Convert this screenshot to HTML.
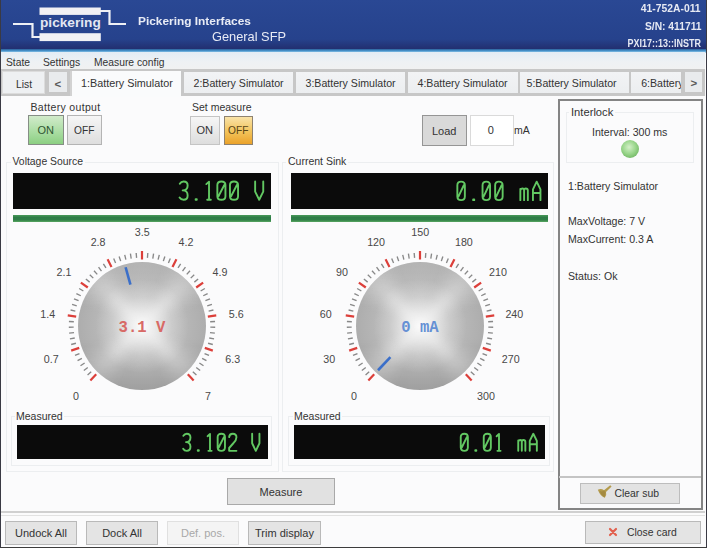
<!DOCTYPE html>
<html><head><meta charset="utf-8">
<style>
*{box-sizing:border-box;margin:0;padding:0}
html,body{width:708px;height:552px;overflow:hidden;background:#fff;font-family:"Liberation Sans",sans-serif;color:#333}
.a{position:absolute}
#root{position:absolute;left:0;top:0;width:708px;height:552px;overflow:hidden}
#win{left:0;top:0;width:707px;height:548px;background:#fbfbfc;border-left:1px solid #3c3c3c;border-right:1px solid #3c3c3c;border-bottom:1px solid #3c3c3c}
#hdr{left:0;top:0;width:706px;height:49px;background:linear-gradient(#2a4894,#26428c 80%,#222f70)}
#hline{left:0;top:48.5px;width:706px;height:4px;background:linear-gradient(#2b5f9a,#4a9ad2 50%,#a8cfea 85%,#d8e6f2)}
.t{position:absolute;white-space:nowrap;font-size:11px;line-height:13px}
#menu{left:1px;top:52px;width:704px;height:18px;background:linear-gradient(#e3ecf5,#eef1f4 55%,#f1f1f1)}
.btn{position:absolute;border:1px solid #a9a9a9;background:linear-gradient(#ededed,#dcdcdc);text-align:center;font-size:11px;white-space:nowrap;color:#333}
.lcd{position:absolute;background:#0b0b0b;overflow:hidden}
.gbar{position:absolute;height:6.5px;background:linear-gradient(#4a9a5a,#2e7c47 35%,#2f7f47 70%,#5aa862)}
.tabi{position:absolute;top:71.5px;height:21.7px;background:linear-gradient(#f2f3f5,#eceef0);overflow:hidden}
.tt{position:absolute;top:5.5px;white-space:nowrap;font-size:10.6px;line-height:13px;color:#333}
.grp{position:absolute;border:1px solid #eceef0}
</style></head><body><div id="root">
<div id="win" class="a"></div>
<div id="hdr" class="a"></div>
<div id="hline" class="a"></div>

<!-- logo -->
<svg class="a" style="left:0;top:0" width="140" height="49">
  <rect x="39.5" y="7.5" width="61.3" height="7.4" fill="#f1f1f4"/>
  <rect x="39.5" y="33.2" width="61.3" height="7.9" fill="#f1f1f4"/>
  <polyline points="13,24 32.5,24 32.5,37 40,37" fill="none" stroke="#eef0f5" stroke-width="2.2"/>
  <polyline points="100,11 109.5,11 109.5,24 126,24" fill="none" stroke="#eef0f5" stroke-width="2.2"/>
  <text x="0" y="0" transform="translate(40,27.2) scale(1.094,1)" font-family="Liberation Sans" font-weight="bold" font-size="12.5" fill="#e4e7f2">pickering</text>
</svg>
<div class="t" style="left:138px;top:15px;font-size:11px;font-weight:bold;color:#e8ebf5;transform:scaleX(1.08);transform-origin:left center">Pickering Interfaces</div>
<div class="t" style="left:211.5px;top:30px;font-size:13px;color:#e8ebf5;transform:scaleX(0.985);transform-origin:left center">General SFP</div>
<div class="t" style="right:7px;top:2px;font-size:11px;font-weight:bold;color:#e6e9f3;transform:scaleX(0.94);transform-origin:right center">41-752A-011</div>
<div class="t" style="right:6.5px;top:19.5px;font-size:11px;font-weight:bold;color:#e6e9f3;transform:scaleX(0.935);transform-origin:right center">S/N: 411711</div>
<div class="t" style="right:7px;top:37px;font-size:11px;font-weight:bold;color:#e6e9f3;transform:scaleX(0.815);transform-origin:right center">PXI17::13::INSTR</div>

<!-- menu -->
<div id="menu" class="a"></div>
<div class="t" style="left:6px;top:56px;font-size:10.3px">State</div>
<div class="t" style="left:43px;top:56px;font-size:10.3px">Settings</div>
<div class="t" style="left:94px;top:56px;font-size:10.3px">Measure config</div>


<!-- tabs -->
<div class="a" style="left:1px;top:68.5px;width:704px;height:27.5px;background:#c7c7c7"></div>
<div class="a" style="left:2px;top:71px;width:43px;height:22.5px;background:#eef0f2;border:1px solid #dcdcdc"></div>
<div class="t" style="left:16px;top:78px;font-size:10.3px">List</div>
<div class="a" style="left:49px;top:71.5px;width:18px;height:20.5px;background:#e9ebed"></div>
<div class="t" style="left:54.5px;top:77.5px;font-size:11.5px;font-weight:bold;color:#5a5a5a">&lt;</div>
<div class="a" style="left:70px;top:71px;width:112px;height:26px;background:#fafbfc"></div>
<div class="a" style="left:69.5px;top:71px;width:2.5px;height:25px;background:#d2d2d2"></div>
<div class="a" style="left:181px;top:71px;width:2.5px;height:25px;background:#c7c7c7"></div>
<div class="t" style="left:81px;top:77px;font-size:10.8px">1:Battery Simulator</div>
<div class="tabi" style="left:184px;width:109px"><span class="tt" style="left:9.5px">2:Battery Simulator</span></div>
<div class="tabi" style="left:296px;width:109px"><span class="tt" style="left:9.5px">3:Battery Simulator</span></div>
<div class="tabi" style="left:407.5px;width:110px"><span class="tt" style="left:10px">4:Battery Simulator</span></div>
<div class="tabi" style="left:520px;width:108.5px"><span class="tt" style="left:6.5px">5:Battery Simulator</span></div>
<div class="tabi" style="left:631.2px;width:49.7px"><span class="tt" style="left:10px">6:Battery Simulator</span></div>
<div class="a" style="left:685.3px;top:71.5px;width:17px;height:20.5px;background:#e9ebed"></div>
<div class="t" style="left:690.5px;top:77px;font-size:11.5px;font-weight:bold;color:#5a5a5a">&gt;</div>

<!-- battery output -->
<div class="t" style="left:30.5px;top:101px;font-size:10.5px;letter-spacing:0.33px">Battery output</div>
<div class="btn" style="left:28px;top:115px;width:35.5px;height:30px;line-height:29px;border:1.5px solid #868e86;background:linear-gradient(#d2ebcb,#a8dca0 60%,#8ccf82);color:#2f5530">ON</div>
<div class="btn" style="left:67px;top:115px;width:34.5px;height:30px;line-height:29px;border:1.5px solid #b4b4b4;background:linear-gradient(#f6f6f6,#dedede);font-size:10.2px">OFF</div>

<div class="t" style="left:192px;top:101px;font-size:10.5px">Set measure</div>
<div class="btn" style="left:189.5px;top:115.5px;width:30.5px;height:29.5px;line-height:26.5px;border:1.5px solid #c4c4c4;background:linear-gradient(#f6f6f6,#dddddd)">ON</div>
<div class="btn" style="left:223.5px;top:115.5px;width:29.5px;height:29.5px;line-height:28px;border:1.5px solid #8e8270;background:linear-gradient(#f9e3a8,#f2c35a 55%,#eba22a);color:#5a4515;font-size:10.2px">OFF</div>

<div class="btn" style="left:421.7px;top:114.7px;width:45px;height:31.8px;line-height:30px;border:1.5px solid #959595;background:#d9d9d9">Load</div>
<div class="btn" style="left:470px;top:115px;width:44px;height:31px;line-height:29px;border:1.5px solid #dadada;background:#fff;padding-right:2.6px">0</div>
<div class="t" style="left:514px;top:124px;font-size:10.5px">mA</div>

<!-- voltage source -->
<div class="grp" style="left:5.5px;top:162px;width:273px;height:310px"></div>
<div class="t" style="left:10.5px;top:155px;font-size:10.4px;background:#fbfbfc;padding:0 2px">Voltage Source</div>
<div class="lcd" style="left:13px;top:173px;width:258px;height:36px"></div>
<div class="gbar" style="left:13px;top:215px;width:258px"></div>
<svg class="a" style="left:32px;top:216px" width="220" height="220">
<line x1="64.22" y1="158.24" x2="58.37" y2="164.40" stroke="#dc3f3a" stroke-width="2.2"/>
<line x1="59.20" y1="155.66" x2="55.56" y2="158.93" stroke="#888888" stroke-width="1.35"/>
<line x1="55.74" y1="151.48" x2="51.85" y2="154.46" stroke="#888888" stroke-width="1.35"/>
<line x1="52.62" y1="147.05" x2="48.51" y2="149.71" stroke="#888888" stroke-width="1.35"/>
<line x1="49.86" y1="142.38" x2="45.55" y2="144.70" stroke="#888888" stroke-width="1.35"/>
<line x1="47.48" y1="137.51" x2="43.00" y2="139.48" stroke="#888888" stroke-width="1.35"/>
<line x1="47.20" y1="131.87" x2="39.17" y2="134.66" stroke="#dc3f3a" stroke-width="2.2"/>
<line x1="43.92" y1="127.27" x2="39.18" y2="128.51" stroke="#888888" stroke-width="1.35"/>
<line x1="42.76" y1="121.98" x2="37.93" y2="122.84" stroke="#888888" stroke-width="1.35"/>
<line x1="42.02" y1="116.61" x2="37.14" y2="117.08" stroke="#888888" stroke-width="1.35"/>
<line x1="41.71" y1="111.19" x2="36.81" y2="111.28" stroke="#888888" stroke-width="1.35"/>
<line x1="41.83" y1="105.77" x2="36.94" y2="105.47" stroke="#888888" stroke-width="1.35"/>
<line x1="44.16" y1="100.63" x2="35.75" y2="99.43" stroke="#dc3f3a" stroke-width="2.2"/>
<line x1="43.36" y1="95.04" x2="38.58" y2="93.97" stroke="#888888" stroke-width="1.35"/>
<line x1="44.75" y1="89.80" x2="40.07" y2="88.35" stroke="#888888" stroke-width="1.35"/>
<line x1="46.56" y1="84.69" x2="42.01" y2="82.88" stroke="#888888" stroke-width="1.35"/>
<line x1="48.77" y1="79.74" x2="44.38" y2="77.57" stroke="#888888" stroke-width="1.35"/>
<line x1="51.36" y1="74.98" x2="47.16" y2="72.46" stroke="#888888" stroke-width="1.35"/>
<line x1="55.79" y1="71.48" x2="48.87" y2="66.55" stroke="#dc3f3a" stroke-width="2.2"/>
<line x1="57.64" y1="66.14" x2="53.88" y2="63.00" stroke="#888888" stroke-width="1.35"/>
<line x1="61.28" y1="62.13" x2="57.79" y2="58.69" stroke="#888888" stroke-width="1.35"/>
<line x1="65.24" y1="58.41" x2="62.02" y2="54.71" stroke="#888888" stroke-width="1.35"/>
<line x1="69.47" y1="55.03" x2="66.56" y2="51.08" stroke="#888888" stroke-width="1.35"/>
<line x1="73.96" y1="51.98" x2="71.37" y2="47.82" stroke="#888888" stroke-width="1.35"/>
<line x1="79.50" y1="50.91" x2="75.60" y2="43.35" stroke="#dc3f3a" stroke-width="2.2"/>
<line x1="83.59" y1="47.01" x2="81.69" y2="42.49" stroke="#888888" stroke-width="1.35"/>
<line x1="88.67" y1="45.12" x2="87.14" y2="40.46" stroke="#888888" stroke-width="1.35"/>
<line x1="93.88" y1="43.63" x2="92.73" y2="38.87" stroke="#888888" stroke-width="1.35"/>
<line x1="99.20" y1="42.56" x2="98.42" y2="37.72" stroke="#888888" stroke-width="1.35"/>
<line x1="104.58" y1="41.92" x2="104.19" y2="37.03" stroke="#888888" stroke-width="1.35"/>
<line x1="110.00" y1="43.50" x2="110.00" y2="35.00" stroke="#dc3f3a" stroke-width="2.2"/>
<line x1="115.42" y1="41.92" x2="115.81" y2="37.03" stroke="#888888" stroke-width="1.35"/>
<line x1="120.80" y1="42.56" x2="121.58" y2="37.72" stroke="#888888" stroke-width="1.35"/>
<line x1="126.12" y1="43.63" x2="127.27" y2="38.87" stroke="#888888" stroke-width="1.35"/>
<line x1="131.33" y1="45.12" x2="132.86" y2="40.46" stroke="#888888" stroke-width="1.35"/>
<line x1="136.41" y1="47.01" x2="138.31" y2="42.49" stroke="#888888" stroke-width="1.35"/>
<line x1="140.50" y1="50.91" x2="144.40" y2="43.35" stroke="#dc3f3a" stroke-width="2.2"/>
<line x1="146.04" y1="51.98" x2="148.63" y2="47.82" stroke="#888888" stroke-width="1.35"/>
<line x1="150.53" y1="55.03" x2="153.44" y2="51.08" stroke="#888888" stroke-width="1.35"/>
<line x1="154.76" y1="58.41" x2="157.98" y2="54.71" stroke="#888888" stroke-width="1.35"/>
<line x1="158.72" y1="62.13" x2="162.21" y2="58.69" stroke="#888888" stroke-width="1.35"/>
<line x1="162.36" y1="66.14" x2="166.12" y2="63.00" stroke="#888888" stroke-width="1.35"/>
<line x1="164.21" y1="71.48" x2="171.13" y2="66.55" stroke="#dc3f3a" stroke-width="2.2"/>
<line x1="168.64" y1="74.98" x2="172.84" y2="72.46" stroke="#888888" stroke-width="1.35"/>
<line x1="171.23" y1="79.74" x2="175.62" y2="77.57" stroke="#888888" stroke-width="1.35"/>
<line x1="173.44" y1="84.69" x2="177.99" y2="82.88" stroke="#888888" stroke-width="1.35"/>
<line x1="175.25" y1="89.80" x2="179.93" y2="88.35" stroke="#888888" stroke-width="1.35"/>
<line x1="176.64" y1="95.04" x2="181.42" y2="93.97" stroke="#888888" stroke-width="1.35"/>
<line x1="175.84" y1="100.63" x2="184.25" y2="99.43" stroke="#dc3f3a" stroke-width="2.2"/>
<line x1="178.17" y1="105.77" x2="183.06" y2="105.47" stroke="#888888" stroke-width="1.35"/>
<line x1="178.29" y1="111.19" x2="183.19" y2="111.28" stroke="#888888" stroke-width="1.35"/>
<line x1="177.98" y1="116.61" x2="182.86" y2="117.08" stroke="#888888" stroke-width="1.35"/>
<line x1="177.24" y1="121.98" x2="182.07" y2="122.84" stroke="#888888" stroke-width="1.35"/>
<line x1="176.08" y1="127.27" x2="180.82" y2="128.51" stroke="#888888" stroke-width="1.35"/>
<line x1="172.80" y1="131.87" x2="180.83" y2="134.66" stroke="#dc3f3a" stroke-width="2.2"/>
<line x1="172.52" y1="137.51" x2="177.00" y2="139.48" stroke="#888888" stroke-width="1.35"/>
<line x1="170.14" y1="142.38" x2="174.45" y2="144.70" stroke="#888888" stroke-width="1.35"/>
<line x1="167.38" y1="147.05" x2="171.49" y2="149.71" stroke="#888888" stroke-width="1.35"/>
<line x1="164.26" y1="151.48" x2="168.15" y2="154.46" stroke="#888888" stroke-width="1.35"/>
<line x1="160.80" y1="155.66" x2="164.44" y2="158.93" stroke="#888888" stroke-width="1.35"/>
<line x1="155.78" y1="158.24" x2="161.63" y2="164.40" stroke="#dc3f3a" stroke-width="2.2"/>
<text x="44.0" y="183.8" text-anchor="middle" font-family="Liberation Sans" font-size="10.7" fill="#484848">0</text>
<text x="19.3" y="147.3" text-anchor="middle" font-family="Liberation Sans" font-size="10.7" fill="#484848">0.7</text>
<text x="15.7" y="101.5" text-anchor="middle" font-family="Liberation Sans" font-size="10.7" fill="#484848">1.4</text>
<text x="32.0" y="59.9" text-anchor="middle" font-family="Liberation Sans" font-size="10.7" fill="#484848">2.1</text>
<text x="66.1" y="29.6" text-anchor="middle" font-family="Liberation Sans" font-size="10.7" fill="#484848">2.8</text>
<text x="110.2" y="19.6" text-anchor="middle" font-family="Liberation Sans" font-size="10.7" fill="#484848">3.5</text>
<text x="153.9" y="29.6" text-anchor="middle" font-family="Liberation Sans" font-size="10.7" fill="#484848">4.2</text>
<text x="188.0" y="59.9" text-anchor="middle" font-family="Liberation Sans" font-size="10.7" fill="#484848">4.9</text>
<text x="204.3" y="101.5" text-anchor="middle" font-family="Liberation Sans" font-size="10.7" fill="#484848">5.6</text>
<text x="200.7" y="147.3" text-anchor="middle" font-family="Liberation Sans" font-size="10.7" fill="#484848">6.3</text>
<text x="176.0" y="183.8" text-anchor="middle" font-family="Liberation Sans" font-size="10.7" fill="#484848">7</text>
</svg><div class="a" style="left:78px;top:262px;width:128px;height:128px;border-radius:50%;overflow:hidden;background:radial-gradient(circle at 50% 50%,#c4c4c4 0%,#b6b6b6 50%,#aaaaaa 78%,#989898 94%,#909090 100%)"><div class="a" style="left:-20px;top:-20px;width:168px;height:168px;filter:blur(5px);-webkit-mask-image:radial-gradient(circle,#000 0%,#000 30%,rgba(0,0,0,.5) 60%,rgba(0,0,0,.2) 80%);background:conic-gradient(rgba(255,255,255,0) 0deg,rgba(255,255,255,0) 22deg,rgba(255,255,255,.45) 45deg,rgba(255,255,255,0) 68deg,rgba(255,255,255,0) 112deg,rgba(255,255,255,.45) 135deg,rgba(255,255,255,0) 158deg,rgba(255,255,255,0) 202deg,rgba(255,255,255,.45) 225deg,rgba(255,255,255,0) 248deg,rgba(255,255,255,0) 292deg,rgba(255,255,255,.45) 315deg,rgba(255,255,255,0) 338deg,rgba(255,255,255,0) 360deg)"></div><div class="a" style="left:0;top:0;width:100%;height:100%;border-radius:50%;background:radial-gradient(circle at 50% 50%, rgba(255,255,255,.92) 0%, rgba(255,255,255,.62) 16%, rgba(255,255,255,.25) 33%, rgba(255,255,255,0) 52%),linear-gradient(rgba(255,255,255,.08),rgba(255,255,255,0) 40%,rgba(0,0,0,0) 60%,rgba(0,0,0,.08))"></div></div><svg class="a" style="left:72px;top:256px" width="140" height="140"><line x1="58.44" y1="28.58" x2="53.60" y2="11.25" stroke="#3b6fc9" stroke-width="2.6"/></svg>
<div class="t" style="left:100px;top:320px;width:84px;text-align:center;font-family:'Liberation Mono';font-weight:bold;font-size:15.6px;line-height:16px;color:#d86a66">3.1 V</div>
<div class="grp" style="left:11px;top:416px;width:261px;height:50px"></div>
<div class="t" style="left:15px;top:410px;font-size:10.5px;background:#fbfbfc;padding:0 1px">Measured</div>
<div class="lcd" style="left:17px;top:425px;width:251px;height:34px"></div>

<!-- current sink -->
<div class="grp" style="left:282px;top:162px;width:271.5px;height:310px"></div>
<div class="t" style="left:286px;top:155px;font-size:10.5px;background:#fbfbfc;padding:0 2px">Current Sink</div>
<div class="lcd" style="left:291px;top:173px;width:257px;height:36px"></div>
<div class="gbar" style="left:291px;top:215px;width:257px"></div>
<svg class="a" style="left:310px;top:216px" width="220" height="220">
<line x1="64.22" y1="158.24" x2="58.37" y2="164.40" stroke="#dc3f3a" stroke-width="2.2"/>
<line x1="59.20" y1="155.66" x2="55.56" y2="158.93" stroke="#888888" stroke-width="1.35"/>
<line x1="55.74" y1="151.48" x2="51.85" y2="154.46" stroke="#888888" stroke-width="1.35"/>
<line x1="52.62" y1="147.05" x2="48.51" y2="149.71" stroke="#888888" stroke-width="1.35"/>
<line x1="49.86" y1="142.38" x2="45.55" y2="144.70" stroke="#888888" stroke-width="1.35"/>
<line x1="47.48" y1="137.51" x2="43.00" y2="139.48" stroke="#888888" stroke-width="1.35"/>
<line x1="47.20" y1="131.87" x2="39.17" y2="134.66" stroke="#dc3f3a" stroke-width="2.2"/>
<line x1="43.92" y1="127.27" x2="39.18" y2="128.51" stroke="#888888" stroke-width="1.35"/>
<line x1="42.76" y1="121.98" x2="37.93" y2="122.84" stroke="#888888" stroke-width="1.35"/>
<line x1="42.02" y1="116.61" x2="37.14" y2="117.08" stroke="#888888" stroke-width="1.35"/>
<line x1="41.71" y1="111.19" x2="36.81" y2="111.28" stroke="#888888" stroke-width="1.35"/>
<line x1="41.83" y1="105.77" x2="36.94" y2="105.47" stroke="#888888" stroke-width="1.35"/>
<line x1="44.16" y1="100.63" x2="35.75" y2="99.43" stroke="#dc3f3a" stroke-width="2.2"/>
<line x1="43.36" y1="95.04" x2="38.58" y2="93.97" stroke="#888888" stroke-width="1.35"/>
<line x1="44.75" y1="89.80" x2="40.07" y2="88.35" stroke="#888888" stroke-width="1.35"/>
<line x1="46.56" y1="84.69" x2="42.01" y2="82.88" stroke="#888888" stroke-width="1.35"/>
<line x1="48.77" y1="79.74" x2="44.38" y2="77.57" stroke="#888888" stroke-width="1.35"/>
<line x1="51.36" y1="74.98" x2="47.16" y2="72.46" stroke="#888888" stroke-width="1.35"/>
<line x1="55.79" y1="71.48" x2="48.87" y2="66.55" stroke="#dc3f3a" stroke-width="2.2"/>
<line x1="57.64" y1="66.14" x2="53.88" y2="63.00" stroke="#888888" stroke-width="1.35"/>
<line x1="61.28" y1="62.13" x2="57.79" y2="58.69" stroke="#888888" stroke-width="1.35"/>
<line x1="65.24" y1="58.41" x2="62.02" y2="54.71" stroke="#888888" stroke-width="1.35"/>
<line x1="69.47" y1="55.03" x2="66.56" y2="51.08" stroke="#888888" stroke-width="1.35"/>
<line x1="73.96" y1="51.98" x2="71.37" y2="47.82" stroke="#888888" stroke-width="1.35"/>
<line x1="79.50" y1="50.91" x2="75.60" y2="43.35" stroke="#dc3f3a" stroke-width="2.2"/>
<line x1="83.59" y1="47.01" x2="81.69" y2="42.49" stroke="#888888" stroke-width="1.35"/>
<line x1="88.67" y1="45.12" x2="87.14" y2="40.46" stroke="#888888" stroke-width="1.35"/>
<line x1="93.88" y1="43.63" x2="92.73" y2="38.87" stroke="#888888" stroke-width="1.35"/>
<line x1="99.20" y1="42.56" x2="98.42" y2="37.72" stroke="#888888" stroke-width="1.35"/>
<line x1="104.58" y1="41.92" x2="104.19" y2="37.03" stroke="#888888" stroke-width="1.35"/>
<line x1="110.00" y1="43.50" x2="110.00" y2="35.00" stroke="#dc3f3a" stroke-width="2.2"/>
<line x1="115.42" y1="41.92" x2="115.81" y2="37.03" stroke="#888888" stroke-width="1.35"/>
<line x1="120.80" y1="42.56" x2="121.58" y2="37.72" stroke="#888888" stroke-width="1.35"/>
<line x1="126.12" y1="43.63" x2="127.27" y2="38.87" stroke="#888888" stroke-width="1.35"/>
<line x1="131.33" y1="45.12" x2="132.86" y2="40.46" stroke="#888888" stroke-width="1.35"/>
<line x1="136.41" y1="47.01" x2="138.31" y2="42.49" stroke="#888888" stroke-width="1.35"/>
<line x1="140.50" y1="50.91" x2="144.40" y2="43.35" stroke="#dc3f3a" stroke-width="2.2"/>
<line x1="146.04" y1="51.98" x2="148.63" y2="47.82" stroke="#888888" stroke-width="1.35"/>
<line x1="150.53" y1="55.03" x2="153.44" y2="51.08" stroke="#888888" stroke-width="1.35"/>
<line x1="154.76" y1="58.41" x2="157.98" y2="54.71" stroke="#888888" stroke-width="1.35"/>
<line x1="158.72" y1="62.13" x2="162.21" y2="58.69" stroke="#888888" stroke-width="1.35"/>
<line x1="162.36" y1="66.14" x2="166.12" y2="63.00" stroke="#888888" stroke-width="1.35"/>
<line x1="164.21" y1="71.48" x2="171.13" y2="66.55" stroke="#dc3f3a" stroke-width="2.2"/>
<line x1="168.64" y1="74.98" x2="172.84" y2="72.46" stroke="#888888" stroke-width="1.35"/>
<line x1="171.23" y1="79.74" x2="175.62" y2="77.57" stroke="#888888" stroke-width="1.35"/>
<line x1="173.44" y1="84.69" x2="177.99" y2="82.88" stroke="#888888" stroke-width="1.35"/>
<line x1="175.25" y1="89.80" x2="179.93" y2="88.35" stroke="#888888" stroke-width="1.35"/>
<line x1="176.64" y1="95.04" x2="181.42" y2="93.97" stroke="#888888" stroke-width="1.35"/>
<line x1="175.84" y1="100.63" x2="184.25" y2="99.43" stroke="#dc3f3a" stroke-width="2.2"/>
<line x1="178.17" y1="105.77" x2="183.06" y2="105.47" stroke="#888888" stroke-width="1.35"/>
<line x1="178.29" y1="111.19" x2="183.19" y2="111.28" stroke="#888888" stroke-width="1.35"/>
<line x1="177.98" y1="116.61" x2="182.86" y2="117.08" stroke="#888888" stroke-width="1.35"/>
<line x1="177.24" y1="121.98" x2="182.07" y2="122.84" stroke="#888888" stroke-width="1.35"/>
<line x1="176.08" y1="127.27" x2="180.82" y2="128.51" stroke="#888888" stroke-width="1.35"/>
<line x1="172.80" y1="131.87" x2="180.83" y2="134.66" stroke="#dc3f3a" stroke-width="2.2"/>
<line x1="172.52" y1="137.51" x2="177.00" y2="139.48" stroke="#888888" stroke-width="1.35"/>
<line x1="170.14" y1="142.38" x2="174.45" y2="144.70" stroke="#888888" stroke-width="1.35"/>
<line x1="167.38" y1="147.05" x2="171.49" y2="149.71" stroke="#888888" stroke-width="1.35"/>
<line x1="164.26" y1="151.48" x2="168.15" y2="154.46" stroke="#888888" stroke-width="1.35"/>
<line x1="160.80" y1="155.66" x2="164.44" y2="158.93" stroke="#888888" stroke-width="1.35"/>
<line x1="155.78" y1="158.24" x2="161.63" y2="164.40" stroke="#dc3f3a" stroke-width="2.2"/>
<text x="44.0" y="183.8" text-anchor="middle" font-family="Liberation Sans" font-size="10.7" fill="#484848">0</text>
<text x="19.3" y="147.3" text-anchor="middle" font-family="Liberation Sans" font-size="10.7" fill="#484848">30</text>
<text x="15.7" y="101.5" text-anchor="middle" font-family="Liberation Sans" font-size="10.7" fill="#484848">60</text>
<text x="32.0" y="59.9" text-anchor="middle" font-family="Liberation Sans" font-size="10.7" fill="#484848">90</text>
<text x="66.1" y="29.6" text-anchor="middle" font-family="Liberation Sans" font-size="10.7" fill="#484848">120</text>
<text x="110.2" y="19.6" text-anchor="middle" font-family="Liberation Sans" font-size="10.7" fill="#484848">150</text>
<text x="153.9" y="29.6" text-anchor="middle" font-family="Liberation Sans" font-size="10.7" fill="#484848">180</text>
<text x="188.0" y="59.9" text-anchor="middle" font-family="Liberation Sans" font-size="10.7" fill="#484848">210</text>
<text x="204.3" y="101.5" text-anchor="middle" font-family="Liberation Sans" font-size="10.7" fill="#484848">240</text>
<text x="200.7" y="147.3" text-anchor="middle" font-family="Liberation Sans" font-size="10.7" fill="#484848">270</text>
<text x="176.0" y="183.8" text-anchor="middle" font-family="Liberation Sans" font-size="10.7" fill="#484848">300</text>
</svg><div class="a" style="left:356px;top:262px;width:128px;height:128px;border-radius:50%;overflow:hidden;background:radial-gradient(circle at 50% 50%,#c4c4c4 0%,#b6b6b6 50%,#aaaaaa 78%,#989898 94%,#909090 100%)"><div class="a" style="left:-20px;top:-20px;width:168px;height:168px;filter:blur(5px);-webkit-mask-image:radial-gradient(circle,#000 0%,#000 30%,rgba(0,0,0,.5) 60%,rgba(0,0,0,.2) 80%);background:conic-gradient(rgba(255,255,255,0) 0deg,rgba(255,255,255,0) 22deg,rgba(255,255,255,.45) 45deg,rgba(255,255,255,0) 68deg,rgba(255,255,255,0) 112deg,rgba(255,255,255,.45) 135deg,rgba(255,255,255,0) 158deg,rgba(255,255,255,0) 202deg,rgba(255,255,255,.45) 225deg,rgba(255,255,255,0) 248deg,rgba(255,255,255,0) 292deg,rgba(255,255,255,.45) 315deg,rgba(255,255,255,0) 338deg,rgba(255,255,255,0) 360deg)"></div><div class="a" style="left:0;top:0;width:100%;height:100%;border-radius:50%;background:radial-gradient(circle at 50% 50%, rgba(255,255,255,.92) 0%, rgba(255,255,255,.62) 16%, rgba(255,255,255,.25) 33%, rgba(255,255,255,0) 52%),linear-gradient(rgba(255,255,255,.08),rgba(255,255,255,0) 40%,rgba(0,0,0,0) 60%,rgba(0,0,0,.08))"></div></div><svg class="a" style="left:350px;top:256px" width="140" height="140"><line x1="40.40" y1="101.19" x2="28.01" y2="114.25" stroke="#3b6fc9" stroke-width="2.6"/></svg>
<div class="t" style="left:378px;top:320px;width:84px;text-align:center;font-family:'Liberation Mono';font-weight:bold;font-size:15.6px;line-height:16px;color:#6590d4">0 mA</div>
<div class="grp" style="left:288px;top:416px;width:262px;height:50px"></div>
<div class="t" style="left:293px;top:410px;font-size:10.5px;background:#fbfbfc;padding:0 1px">Measured</div>
<div class="lcd" style="left:294px;top:425px;width:251px;height:34px"></div>

<div class="btn" style="left:227px;top:478px;width:108px;height:27px;line-height:27px;border:1px solid #a9a9a9;background:#e1e1e1">Measure</div>

<svg class="a" style="left:0;top:0" width="708" height="552"><g fill="none" stroke="#62c862" stroke-width="1.9" stroke-linecap="round" stroke-linejoin="round"><path transform="translate(177.97,180.43) scale(1.125,1.017)" d="M1.6 3.2 Q2.8 1 5 1 Q8.6 1 8.6 5 Q8.6 9.8 4.2 9.8 Q8.6 9.8 8.6 14.8 Q8.6 19 5 19 Q2.6 19 1.4 16.8" vector-effect="non-scaling-stroke"/><path transform="translate(190.57,180.43) scale(1.125,1.017)" d="M4.5 18.4 L5.5 18.4 L5.5 19 L4.5 19 Z" vector-effect="non-scaling-stroke"/><path transform="translate(203.17,180.43) scale(1.125,1.017)" d="M2.8 3.6 L5.2 1.2 L5.2 19 M3.6 19 L6.8 19" vector-effect="non-scaling-stroke"/><path transform="translate(215.77,180.43) scale(1.125,1.017)" d="M5 1 Q8.6 1 8.6 4.5 L8.6 15.5 Q8.6 19 5 19 Q1.4 19 1.4 15.5 L1.4 4.5 Q1.4 1 5 1 Z M7.6 4.5 L2.4 15.5" vector-effect="non-scaling-stroke"/><path transform="translate(228.38,180.43) scale(1.125,1.017)" d="M5 1 Q8.6 1 8.6 4.5 L8.6 15.5 Q8.6 19 5 19 Q1.4 19 1.4 15.5 L1.4 4.5 Q1.4 1 5 1 Z M7.6 4.5 L2.4 15.5" vector-effect="non-scaling-stroke"/><path transform="translate(253.57,180.43) scale(1.125,1.017)" d="M1.4 1 L1.4 11 L5 19 L8.6 11 L8.6 1" vector-effect="non-scaling-stroke"/></g><g fill="none" stroke="#62c862" stroke-width="1.9" stroke-linecap="round" stroke-linejoin="round"><path transform="translate(455.89,180.62) scale(1.042,1.028)" d="M5 1 Q8.6 1 8.6 4.5 L8.6 15.5 Q8.6 19 5 19 Q1.4 19 1.4 15.5 L1.4 4.5 Q1.4 1 5 1 Z M7.6 4.5 L2.4 15.5" vector-effect="non-scaling-stroke"/><path transform="translate(468.49,180.62) scale(1.042,1.028)" d="M4.5 18.4 L5.5 18.4 L5.5 19 L4.5 19 Z" vector-effect="non-scaling-stroke"/><path transform="translate(481.09,180.62) scale(1.042,1.028)" d="M5 1 Q8.6 1 8.6 4.5 L8.6 15.5 Q8.6 19 5 19 Q1.4 19 1.4 15.5 L1.4 4.5 Q1.4 1 5 1 Z M7.6 4.5 L2.4 15.5" vector-effect="non-scaling-stroke"/><path transform="translate(493.69,180.62) scale(1.042,1.028)" d="M5 1 Q8.6 1 8.6 4.5 L8.6 15.5 Q8.6 19 5 19 Q1.4 19 1.4 15.5 L1.4 4.5 Q1.4 1 5 1 Z M7.6 4.5 L2.4 15.5" vector-effect="non-scaling-stroke"/><path transform="translate(518.89,180.62) scale(1.042,1.028)" d="M1.4 19 L1.4 8 M1.4 9.2 Q2.2 7.6 3.4 7.6 Q5 7.6 5 9.6 L5 19 M5 9.6 Q5 7.6 6.6 7.6 Q8.6 7.6 8.6 9.6 L8.6 19" vector-effect="non-scaling-stroke"/><path transform="translate(531.49,180.62) scale(1.042,1.028)" d="M1.4 19 L1.4 8.5 L5 1 L8.6 8.5 L8.6 19 M1.4 12 L8.6 12" vector-effect="non-scaling-stroke"/></g><g fill="none" stroke="#62c862" stroke-width="1.9" stroke-linecap="round" stroke-linejoin="round"><path transform="translate(181.73,432.80) scale(1.014,0.950)" d="M1.6 3.2 Q2.8 1 5 1 Q8.6 1 8.6 5 Q8.6 9.8 4.2 9.8 Q8.6 9.8 8.6 14.8 Q8.6 19 5 19 Q2.6 19 1.4 16.8" vector-effect="non-scaling-stroke"/><path transform="translate(193.23,432.80) scale(1.014,0.950)" d="M4.5 18.4 L5.5 18.4 L5.5 19 L4.5 19 Z" vector-effect="non-scaling-stroke"/><path transform="translate(204.73,432.80) scale(1.014,0.950)" d="M2.8 3.6 L5.2 1.2 L5.2 19 M3.6 19 L6.8 19" vector-effect="non-scaling-stroke"/><path transform="translate(216.23,432.80) scale(1.014,0.950)" d="M5 1 Q8.6 1 8.6 4.5 L8.6 15.5 Q8.6 19 5 19 Q1.4 19 1.4 15.5 L1.4 4.5 Q1.4 1 5 1 Z M7.6 4.5 L2.4 15.5" vector-effect="non-scaling-stroke"/><path transform="translate(227.73,432.80) scale(1.014,0.950)" d="M1.4 4.6 Q1.6 1 5 1 Q8.6 1 8.6 4.8 Q8.6 8 5.5 11 L1.4 16 L1.4 19 L8.6 19" vector-effect="non-scaling-stroke"/><path transform="translate(250.73,432.80) scale(1.014,0.950)" d="M1.4 1 L1.4 11 L5 19 L8.6 11 L8.6 1" vector-effect="non-scaling-stroke"/></g><g fill="none" stroke="#62c862" stroke-width="1.9" stroke-linecap="round" stroke-linejoin="round"><path transform="translate(459.37,432.80) scale(0.986,0.950)" d="M5 1 Q8.6 1 8.6 4.5 L8.6 15.5 Q8.6 19 5 19 Q1.4 19 1.4 15.5 L1.4 4.5 Q1.4 1 5 1 Z M7.6 4.5 L2.4 15.5" vector-effect="non-scaling-stroke"/><path transform="translate(470.87,432.80) scale(0.986,0.950)" d="M4.5 18.4 L5.5 18.4 L5.5 19 L4.5 19 Z" vector-effect="non-scaling-stroke"/><path transform="translate(482.37,432.80) scale(0.986,0.950)" d="M5 1 Q8.6 1 8.6 4.5 L8.6 15.5 Q8.6 19 5 19 Q1.4 19 1.4 15.5 L1.4 4.5 Q1.4 1 5 1 Z M7.6 4.5 L2.4 15.5" vector-effect="non-scaling-stroke"/><path transform="translate(493.87,432.80) scale(0.986,0.950)" d="M2.8 3.6 L5.2 1.2 L5.2 19 M3.6 19 L6.8 19" vector-effect="non-scaling-stroke"/><path transform="translate(516.87,432.80) scale(0.986,0.950)" d="M1.4 19 L1.4 8 M1.4 9.2 Q2.2 7.6 3.4 7.6 Q5 7.6 5 9.6 L5 19 M5 9.6 Q5 7.6 6.6 7.6 Q8.6 7.6 8.6 9.6 L8.6 19" vector-effect="non-scaling-stroke"/><path transform="translate(528.37,432.80) scale(0.986,0.950)" d="M1.4 19 L1.4 8.5 L5 1 L8.6 8.5 L8.6 19 M1.4 12 L8.6 12" vector-effect="non-scaling-stroke"/></g></svg>
<!-- right panel -->
<div class="a" style="left:557.5px;top:99px;width:145.5px;height:410.5px;border:2px solid #848484;background:#fbfbfc"></div>
<div class="grp" style="left:566px;top:112px;width:128px;height:51px"></div>
<div class="t" style="left:569px;top:105.5px;font-size:11.2px;background:#fbfbfc;padding:0 2px">Interlock</div>
<div class="t" style="left:592px;top:126px;font-size:10.6px">Interval: 300 ms</div>
<div class="a" style="left:621px;top:140px;width:18px;height:18px;border-radius:50%;background:radial-gradient(circle at 45% 40%,#d4f0c8 0%,#9ad68c 45%,#70b662 80%,#5e9c54 100%)"></div>
<div class="t" style="left:568px;top:180px;font-size:10.6px">1:Battery Simulator</div>
<div class="t" style="left:568px;top:215px;font-size:10.6px">MaxVoltage: 7 V</div>
<div class="t" style="left:568px;top:233px;font-size:10.6px">MaxCurrent: 0.3 A</div>
<div class="t" style="left:568px;top:270px;font-size:10.6px">Status: Ok</div>
<div class="a" style="left:559px;top:475.5px;width:142px;height:2px;background:#c4c4c4"></div>
<div class="btn" style="left:580px;top:483px;width:100px;height:21px;border:1px solid #bdbdbd;background:#e3e3e3"></div>
<svg class="a" style="left:596px;top:484px" width="17" height="16"><path d="M1.8 5.8 Q5 4.2 8 6.2 L14.2 1.2 L15.6 2.4 L10 8 Q11 11 8.8 13.8 Q4.5 12.5 1.8 5.8 Z" fill="#b39a4c"/><path d="M3.5 7 Q6 8 8 6.4 L9.6 8.2 Q8.5 11 8.8 13.6 Q5 11.5 3.5 7Z" fill="#9a8038" opacity=".6"/></svg>
<div class="t" style="left:614.5px;top:487px;font-size:10.4px">Clear sub</div>

<!-- bottom bar -->
<div class="a" style="left:1px;top:510.7px;width:704px;height:2px;background:#d0d0d0"></div>
<div class="a" style="left:1px;top:514.5px;width:704px;height:1.5px;background:#e2e2e2"></div>
<div class="btn" style="left:5px;top:521px;width:72px;height:24px;line-height:22px;border:1px solid #b9b9b9;background:#e4e4e4">Undock All</div>
<div class="btn" style="left:86px;top:521px;width:72px;height:24px;line-height:22px;border:1px solid #b9b9b9;background:#e4e4e4">Dock All</div>
<div class="btn" style="left:167px;top:521px;width:72px;height:24px;line-height:22px;border:1px solid #e0e0e0;background:#f4f4f4;color:#a8a8a8">Def. pos.</div>
<div class="btn" style="left:248px;top:521px;width:73px;height:24px;line-height:22px;border:1px solid #b9b9b9;background:#e4e4e4">Trim display</div>
<div class="btn" style="left:585px;top:521px;width:116px;height:23px;border:1px solid #b9b9b9;background:#e4e4e4"></div>
<svg class="a" style="left:606px;top:525px" width="14" height="14"><path d="M4 4 L10 10 M10 4 L4 10" stroke="#e2604e" stroke-width="2.2" stroke-linecap="round"/></svg>
<div class="t" style="left:627px;top:526px;font-size:10.4px">Close card</div>

<div class="a" style="left:0;top:0;width:707px;height:548px;border-left:1px solid #3a3a44;border-right:1px solid #3a3a44;border-bottom:1px solid #3c3c3c"></div>
</div>
</body></html>
